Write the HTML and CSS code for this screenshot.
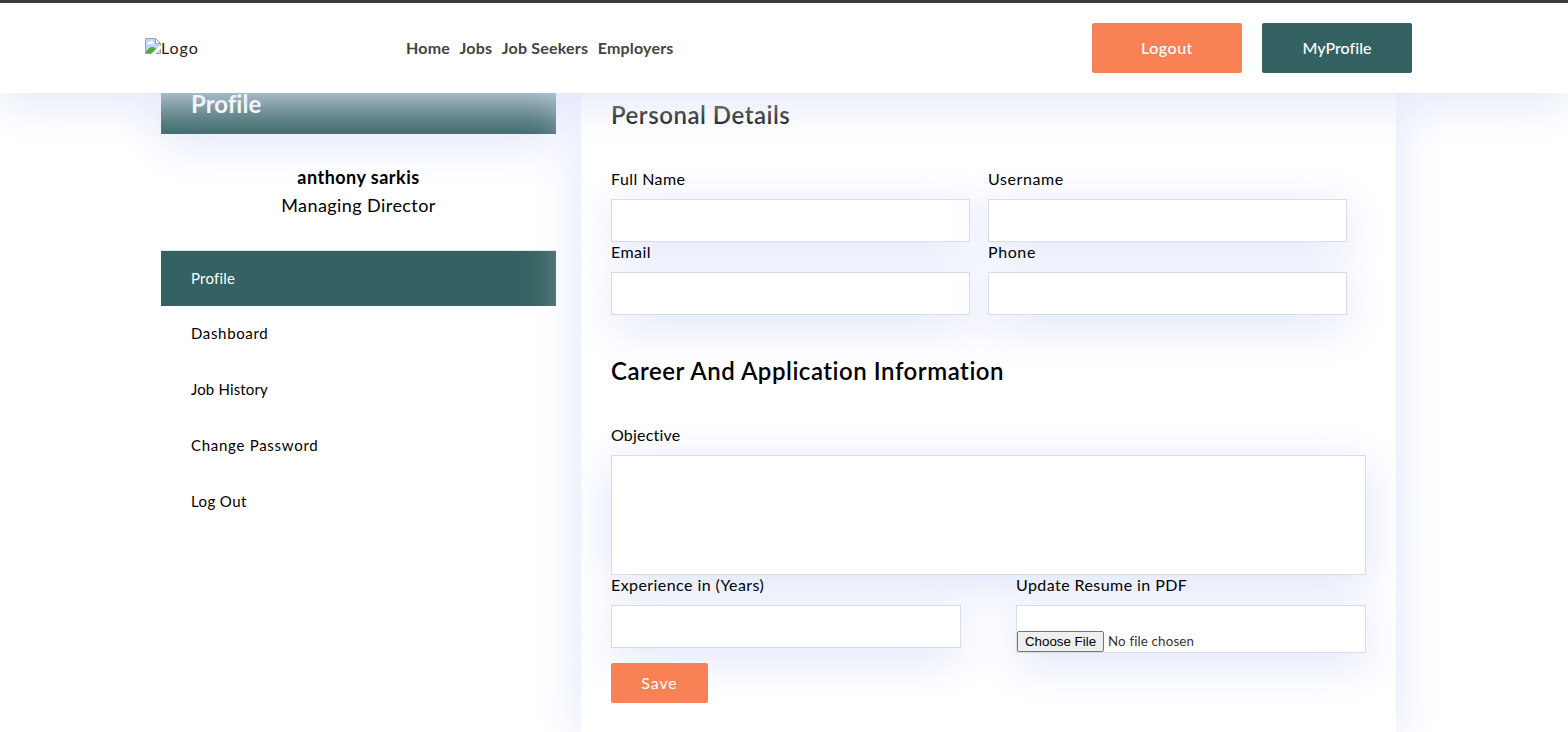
FILE: index.html
```html
<!DOCTYPE html>
<html lang="en">
<head>
<meta charset="utf-8">
<title>Profile</title>
<link rel="stylesheet" href="styles.css">
</head>
<body>
<header class="header">
  <a class="logo">
    <svg class="logo-icon" width="16" height="16" viewBox="0 0 16 16">
      <path d="M.5.5h10l5 5v10H.5z" fill="#c3d6f8"/>
      <path d="M2 6c0-1 1-2 2-2s1.500-1.500 2.500-1.500S8 4 8 4.500 9 5 9 6z" fill="#fff"/>
      <path d="M1 15v-1c1-3 4-5 6.500-5 2 0 3 1 3.500 2l-4 4z" fill="#4fad32"/>
      <path d="M16 6.500V10l-6 6H6.500z" fill="#fff"/>
      <path d="M.5 15.500V.5h10l5 5v2M.5 15.500h6M11 15.500h4.500V11" fill="none" stroke="#a0a0a0"/>
      <path d="M10.500.5v5h5z" fill="#fff" stroke="#a0a0a0"/>
    </svg><span class="logo-text">Logo</span>
  </a>
  <nav class="nav">
    <a>Home</a><a>Jobs</a><a>Job Seekers</a><a>Employers</a>
  </nav>
  <div class="actions">
    <a class="btn btn-orange">Logout</a>
    <a class="btn btn-green">MyProfile</a>
  </div>
</header>
<main class="main">
  <aside class="sidebar">
    <div class="card"><h2 class="card-title">Profile</h2></div>
    <div class="person">
      <div class="name">anthony sarkis</div>
      <div class="role">Managing Director</div>
    </div>
    <ul class="menu">
      <li class="item active">Profile</li>
      <li class="item dashboard">Dashboard</li>
      <li class="item history">Job History</li>
      <li class="item password">Change Password</li>
      <li class="item logout">Log Out</li>
    </ul>
  </aside>
  <section class="panel">
    <h3 class="heading">Personal Details</h3>
    <div class="grid">
      <div class="field"><label class="label">Full Name</label><div class="input"></div></div>
      <div class="field"><label class="label wide">Username</label><div class="input"></div></div>
      <div class="field"><label class="label">Email</label><div class="input"></div></div>
      <div class="field"><label class="label wide">Phone</label><div class="input"></div></div>
    </div>
    <h3 class="heading h-career">Career And Application Information</h3>
    <div class="field"><label class="label tight">Objective</label><div class="input area"></div></div>
    <div class="pair">
      <div class="field"><label class="label">Experience in (Years)</label><div class="input"></div></div>
      <div class="field"><label class="label">Update Resume in PDF</label><div class="input file"><span class="choose">Choose File</span><span class="nofile">No file chosen</span></div></div>
    </div>
    <a class="save">Save</a>
  </section>
</main>
</body>
</html>
```
FILE: styles.css
```css
* { box-sizing: border-box; }
body {
  margin: 0;
  height: 732px;
  overflow: hidden;
  background: #fff;
  color: #000;
  font-family: Muli, Lato, "Open Sans", sans-serif;
  font-size: 16px;
  font-variant-ligatures: none;
}
h2, h3, ul { margin: 0; padding: 0; list-style: none; }
.header {
  position: relative;
  z-index: 2;
  display: flex;
  align-items: center;
  height: 93px;
  padding: 0 156px 0 145px;
  border-top: 3px solid #3c3c3c;
  background: #fff;
  box-shadow: 0 10px 50px #e1e7fa;
}
.logo { display: flex; align-items: flex-start; width: 261px; height: 20px; }
.logo-text { margin-top: 1px; font-size: 16px; line-height: 18px; color: #222; letter-spacing: .95px; }
.nav { display: flex; gap: 9.500px; padding-bottom: 2px; color: #444; font-weight: 700; letter-spacing: .2px; }
.actions { display: flex; gap: 20px; margin-left: auto; }
.btn {
  width: 150px;
  height: 50px;
  border-radius: 2px;
  color: #fff;
  line-height: 50px;
  text-align: center;
  font-weight: 500;
}
.btn-orange { background: #f88156; letter-spacing: .5px; }
.btn-green { background: #346161; letter-spacing: .05px; }
.main {
  display: flex;
  gap: 25px;
  margin-top: -93px;
  height: 732px;
  padding-left: 161px;
}
.sidebar { width: 395px; }
.card {
  height: 134px;
  padding: 89px 30px 0;
  background: #346161;
  box-shadow: 0 10px 50px #e1e7fa;
}
.card-title { color: #fff; font-size: 24px; line-height: 30px; }
.person { padding-top: 29px; text-align: center; line-height: 28px; }
.name { font-size: 18px; font-weight: 700; letter-spacing: .48px; }
.role { padding-bottom: 1px; font-size: 18px; letter-spacing: .43px; }
.menu { margin-top: 30px; font-size: 15px; }
.item { height: 56px; padding: 0 30px; line-height: 54px; }
.active { border-top: 1px solid #dbe8f3; background: #346161; color: #fff; line-height: 55px; letter-spacing: .2px; }
.dashboard { letter-spacing: .65px; }
.history { letter-spacing: .15px; }
.password { letter-spacing: .72px; }
.logout { letter-spacing: .4px; }
.panel {
  width: 815px;
  padding: 100px 30px 0;
  background: #fff;
  box-shadow: 0 10px 50px #e1e7fa;
}
.heading { font-size: 24px; font-weight: 600; line-height: 30px; margin-bottom: 39px; letter-spacing: .53px; }
.h-career { margin-top: 41px; }
.grid { display: grid; grid-template-columns: 359px 359px; column-gap: 18px; }
.pair { display: flex; justify-content: space-between; height: 78px; margin-bottom: 10px; }
.pair .field { width: 350px; }
.label { display: block; height: 30px; line-height: 20px; letter-spacing: .43px; }
.wide { letter-spacing: .6px; }
.tight { letter-spacing: .2px; }
.input {
  height: 43px;
  border: 1px solid #d9dde3;
  background: #fff;
  box-shadow: 0 10px 50px #dde3f9;
}
.area { height: 120px; }
.file { display: flex; align-items: flex-end; height: 48px; font-size: 13.333px; }
.choose {
  width: 87px;
  height: 21px;
  margin-right: 4px;
  border: 1px solid #767676;
  border-radius: 2px;
  background: #efefef;
  font-family: "Liberation Sans", Arial, sans-serif;
  line-height: 19px;
  text-align: center;
}
.nofile { height: 21px; line-height: 20px; color: #333; letter-spacing: .15px; }
.save {
  display: block;
  width: 97px;
  height: 40px;
  border-radius: 2px;
  background: #f88156;
  color: #fff;
  line-height: 40px;
  text-align: center;
  letter-spacing: .9px;
  position: relative;
}
```
